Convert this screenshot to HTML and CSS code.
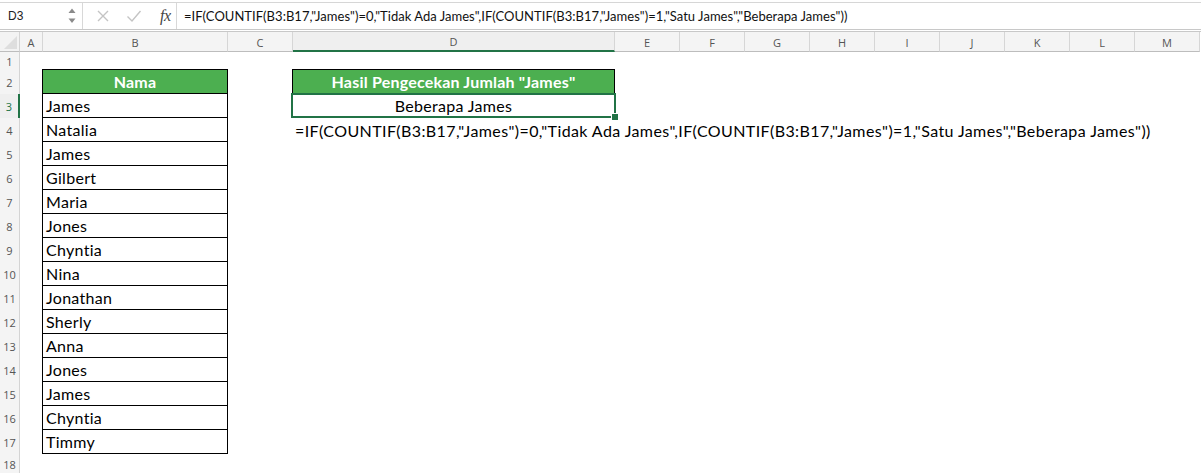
FILE: index.html
```html
<!DOCTYPE html>
<html>
<head>
<meta charset="utf-8">
<link rel="stylesheet" href="styles.css">
</head>
<body>
<div class="fbar">
  <div class="namebox">
    <span class="nb-text">D3</span>
    <span class="spin">
      <svg width="8" height="18" viewBox="0 0 8 18"><path d="M0.5 6 L4 1.5 L7.5 6 Z" fill="#8a8a8a"/><path d="M0.5 11.5 L4 16 L7.5 11.5 Z" fill="#8a8a8a"/></svg>
    </span>
  </div>
  <div class="fb-icons">
    <svg class="ic" width="14" height="14" viewBox="0 0 14 14"><path d="M2 2 L12 12 M12 2 L2 12" stroke="#c4c4c4" stroke-width="1.4" fill="none"/></svg>
    <svg class="ic" width="16" height="14" viewBox="0 0 16 14"><path d="M1.5 7.5 L6 12 L14.5 2" stroke="#c4c4c4" stroke-width="1.4" fill="none"/></svg>
    <span class="fx">fx</span>
  </div>
  <div class="fb-text">=IF(COUNTIF(B3:B17,"James")=0,"Tidak Ada James",IF(COUNTIF(B3:B17,"James")=1,"Satu James","Beberapa James"))</div>
</div>
<div class="sheet">
  <div class="corner"><span class="tri"></span></div>
  <div class="ch">A</div>
  <div class="ch">B</div>
  <div class="ch">C</div>
  <div class="ch active">D</div>
  <div class="ch">E</div>
  <div class="ch">F</div>
  <div class="ch">G</div>
  <div class="ch">H</div>
  <div class="ch">I</div>
  <div class="ch">J</div>
  <div class="ch">K</div>
  <div class="ch">L</div>
  <div class="ch">M</div>

  <div class="rh r1">1</div>
  <div class="rh r2">2</div>
  <div class="rh r3 active">3</div>
  <div class="rh r4">4</div>
  <div class="rh r5">5</div>
  <div class="rh r6">6</div>
  <div class="rh r7">7</div>
  <div class="rh r8">8</div>
  <div class="rh r9">9</div>
  <div class="rh r10">10</div>
  <div class="rh r11">11</div>
  <div class="rh r12">12</div>
  <div class="rh r13">13</div>
  <div class="rh r14">14</div>
  <div class="rh r15">15</div>
  <div class="rh r16">16</div>
  <div class="rh r17">17</div>
  <div class="rh r18">18</div>

  <div class="names">
    <div class="cell head">Nama</div>
    <div class="cell">James</div>
    <div class="cell">Natalia</div>
    <div class="cell">James</div>
    <div class="cell">Gilbert</div>
    <div class="cell">Maria</div>
    <div class="cell">Jones</div>
    <div class="cell">Chyntia</div>
    <div class="cell">Nina</div>
    <div class="cell">Jonathan</div>
    <div class="cell">Sherly</div>
    <div class="cell">Anna</div>
    <div class="cell">Jones</div>
    <div class="cell">James</div>
    <div class="cell">Chyntia</div>
    <div class="cell">Timmy</div>
  </div>

  <div class="result">
    <div class="cell head">Hasil Pengecekan Jumlah "James"</div>
    <div class="cell sel">Beberapa James<span class="handle"></span></div>
  </div>
  <div class="formula">=IF(COUNTIF(B3:B17,"James")=0,"Tidak Ada James",IF(COUNTIF(B3:B17,"James")=1,"Satu James","Beberapa James"))</div>
</div>
</body>
</html>
```

FILE: styles.css
```css
html, body {
  margin: 0;
  padding: 0;
  background: #ffffff;
  overflow: hidden;
}
body {
  width: 1201px;
  height: 473px;
  font-family: "Lato", "Open Sans", sans-serif;
}

/* formula bar */
.fbar {
  box-sizing: border-box;
  height: 28px;
  margin-top: 2px;
  border-top: 1px solid #d6d6d6;
  border-bottom: 1px solid #c8c8c8;
  display: flex;
  align-items: center;
  background: #ffffff;
}
.namebox {
  width: 83px;
  height: 100%;
  box-sizing: border-box;
  border-right: 1px solid #d8d8d8;
  display: flex;
  align-items: center;
  justify-content: space-between;
  padding: 0 6px 0 8px;
}
.nb-text {
  font-family: "Liberation Sans", sans-serif;
  font-size: 12px;
  color: #222;
}
.spin {
  display: flex;
  align-items: center;
}
.fb-icons {
  width: 94px;
  height: 100%;
  box-sizing: border-box;
  border-right: 1px solid #d8d8d8;
  display: flex;
  align-items: center;
  padding-left: 13px;
  gap: 16px;
}
.fx {
  font-family: "Liberation Serif", serif;
  font-style: italic;
  font-size: 16px;
  color: #444;
  margin-left: 2px;
  letter-spacing: -0.5px;
}
.fb-text {
  padding-left: 7px;
  font-family: "Lato", sans-serif;
  font-size: 13px;
  letter-spacing: 0.03px;
  color: #111;
  white-space: nowrap;
}

/* sheet grid */
.sheet {
  margin-top: 1px;
  display: grid;
  grid-template-columns: 20px 23px 185px 65px 322px repeat(9, 65px);
  grid-template-rows: 20px 18px repeat(16, 24px) 1fr;
  height: 442px;
  border-top: 1px solid #c8c8c8;
}
.corner {
  grid-row: 1;
  grid-column: 1;
  background: #f3f3f3;
  border-right: 1px solid #d4d4d4;
  border-bottom: 1px solid #bdbdbd;
  position: relative;
}
.tri {
  position: absolute;
  right: 2px;
  bottom: 2px;
  width: 0;
  height: 0;
  border-left: 13px solid transparent;
  border-bottom: 13px solid #dedede;
}
.ch {
  grid-row: 1;
  background: #f4f4f4;
  border-right: 1px solid #d6d6d6;
  border-bottom: 1px solid #bdbdbd;
  font-family: "Open Sans", sans-serif;
  font-size: 11px;
  color: #555;
  display: flex;
  align-items: center;
  justify-content: center;
  padding-top: 1px;
}
.ch.active {
  border-bottom: 2px solid #217346;
  background: #efefef;
}
.rh {
  grid-column: 1;
  background: #f4f4f4;
  border-right: 1px solid #d4d4d4;
  font-family: "Open Sans", sans-serif;
  font-size: 11px;
  color: #555;
  display: flex;
  align-items: center;
  justify-content: center;
}
.rh.active {
  border-right: 2px solid #217346;
  color: #217346;
  background: #efefef;
}
.r1 { grid-row: 2; }
.r2 { grid-row: 3; }
.r3 { grid-row: 4; }
.r4 { grid-row: 5; }
.r5 { grid-row: 6; }
.r6 { grid-row: 7; }
.r7 { grid-row: 8; }
.r8 { grid-row: 9; }
.r9 { grid-row: 10; }
.r10 { grid-row: 11; }
.r11 { grid-row: 12; }
.r12 { grid-row: 13; }
.r13 { grid-row: 14; }
.r14 { grid-row: 15; }
.r15 { grid-row: 16; }
.r16 { grid-row: 17; }
.r17 { grid-row: 18; }
.r18 { grid-row: 19; align-items: flex-start; padding-top: 3px; }

/* data */
.names {
  grid-column: 3;
  grid-row: 3 / 19;
  display: flex;
  flex-direction: column;
  border-left: 1px solid #000;
  border-right: 1px solid #000;
  border-top: 1px solid #000;
  margin-left: -1px;
  margin-top: -1px;
}
.cell {
  height: 24px;
  box-sizing: border-box;
  border-bottom: 1px solid #000;
  font-size: 16px;
  letter-spacing: 0.3px;
  color: #000;
  display: flex;
  align-items: center;
  padding-left: 3px;
  white-space: nowrap;
}
.cell.head {
  background: #4caf50;
  color: #fff;
  font-weight: 700;
  letter-spacing: 0.2px;
  justify-content: center;
  padding-left: 0;
}
.result {
  grid-column: 5;
  grid-row: 3 / 5;
  display: flex;
  flex-direction: column;
  border-left: 1px solid #000;
  border-right: 1px solid #000;
  border-top: 1px solid #000;
  margin-left: -1px;
  margin-top: -1px;
}
.cell.sel {
  justify-content: center;
  padding-left: 0;
  border: 2px solid #217346;
  margin: -1px -2px 0 -2px;
  height: 25px;
  position: relative;
}
.handle {
  position: absolute;
  right: -5px;
  bottom: -5px;
  width: 6px;
  height: 6px;
  background: #217346;
  border: 1px solid #fff;
}
.formula {
  grid-column: 5;
  grid-row: 5;
  font-size: 16px;
  letter-spacing: 0.4px;
  color: #000;
  white-space: nowrap;
  display: flex;
  align-items: center;
  padding-left: 2px;
}
```
